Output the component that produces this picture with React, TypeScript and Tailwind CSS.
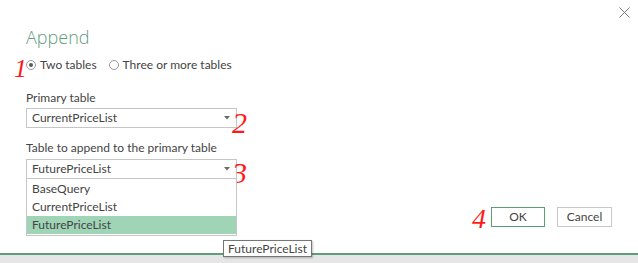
import React from 'react';

const FONT = { fontFamily: 'Lato, "Open Sans", sans-serif' };

function Caret() {
  return (
    <svg width="6" height="4" viewBox="0 0 6 4" className="shrink-0">
      <path d="M0 0 H6 L3 3.5 Z" fill="#6b6b6b" />
    </svg>
  );
}

function Radio({ checked, label }: { checked?: boolean; label: string }) {
  return (
    <label className="flex items-center gap-[4px]">
      <span className="flex h-[10px] w-[10px] items-center justify-center rounded-full border border-[#9a9a9a] bg-white">
        {checked && <span className="h-[4px] w-[4px] rounded-full bg-[#5a5a5a]" />}
      </span>
      <span>{label}</span>
    </label>
  );
}

function Select({ value }: { value: string }) {
  return (
    <div className="flex h-[20px] w-[211px] items-center justify-between border border-[#c6c6c6] bg-white pl-[5px] pr-[6px]">
      <span>{value}</span>
      <Caret />
    </div>
  );
}

// red pen annotations that were scribbled on top of the screenshot
function Mark({ n, className }: { n: string; className: string }) {
  return (
    <span
      className={`pointer-events-none absolute text-[#ff1a1a] italic leading-none ${className}`}
      style={{ fontFamily: '"Liberation Serif", serif' }}
    >
      {n}
    </span>
  );
}

export default function App() {
  const options = ['BaseQuery', 'CurrentPriceList', 'FuturePriceList'];

  return (
    <div
      className="relative flex h-[263px] w-[638px] flex-col overflow-hidden bg-white text-[12px] text-[#444444]"
      style={FONT}
    >
      <button className="absolute right-[8px] top-[7px]">
        <svg width="11" height="11" viewBox="0 0 11 11">
          <path d="M0.5 0.5 L10.5 10.5 M10.5 0.5 L0.5 10.5" stroke="#7a7a7a" strokeWidth="1" />
        </svg>
      </button>

      <div className="flex flex-1 flex-col pl-[26px] pt-[25px]">
        <h1
          className="text-[18px] font-light leading-[24px] text-[#5f9c7e]"
          style={{ fontFamily: '"Open Sans", sans-serif' }}
        >
          Append
        </h1>

        <div className="mt-[7px] flex h-[18px] items-center gap-[12px]">
          <Radio checked label="Two tables" />
          <Radio label="Three or more tables" />
        </div>

        <div className="mt-[15px] leading-[18px]">Primary table</div>
        <div className="mt-[1px]">
          <Select value="CurrentPriceList" />
        </div>

        <div className="mt-[11px] leading-[18px]">Table to append to the primary table</div>
        <div className="relative mt-[2px]">
          <Select value="FuturePriceList" />
          <ul className="absolute left-0 top-[19px] z-10 w-[211px] border border-[#c6c6c6] bg-white py-[1px]">
            {options.map((o) => (
              <li
                key={o}
                className={`flex h-[18px] items-center pl-[5px] ${o === 'FuturePriceList' ? 'bg-[#9fd4b6]' : ''}`}
              >
                {o}
              </li>
            ))}
          </ul>
        </div>

        <div className="mt-auto mb-[26px] flex justify-end gap-[12px] pr-[26px]">
          <button className="h-[20px] w-[54px] border border-[#5a9d79] bg-white">OK</button>
          <button className="h-[20px] w-[55px] border border-[#c8c8c8] bg-white">Cancel</button>
        </div>
      </div>

      <div className="h-[10px] border-t-2 border-[#5f9e7c] bg-[#e6e6e6]" />

      <div className="absolute left-[223px] top-[240px] z-20 border border-[#767676] bg-white px-[4px] leading-[15px] shadow-[1px_1px_2px_rgba(0,0,0,0.25)]">
        FuturePriceList
      </div>

      <Mark n="1" className="left-[14px] top-[56px] text-[26px]" />
      <Mark n="2" className="left-[232px] top-[108px] text-[30px]" />
      <Mark n="3" className="left-[232px] top-[158px] text-[30px]" />
      <Mark n="4" className="left-[472px] top-[205px] text-[28px]" />
    </div>
  );
}
